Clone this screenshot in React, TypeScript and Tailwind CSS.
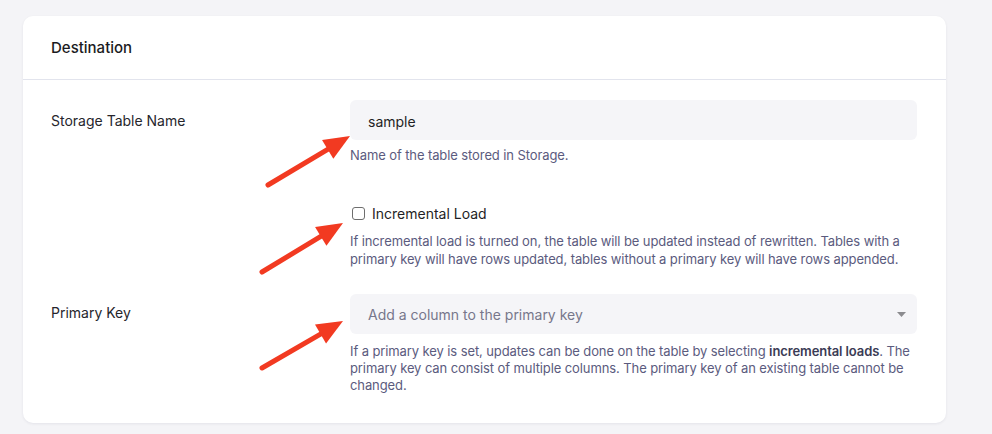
import React from 'react';

type Pt = [number, number];

const Arrow: React.FC<{ tail: Pt; tip: Pt }> = ({ tail, tip }) => {
  const dx = tip[0] - tail[0];
  const dy = tip[1] - tail[1];
  const len = Math.hypot(dx, dy);
  const ux = dx / len;
  const uy = dy / len;
  const head = 26;
  const half = 11;
  const bx = tip[0] - ux * head;
  const by = tip[1] - uy * head;
  const nx = -uy;
  const ny = ux;
  const wings = `${tip[0]},${tip[1]} ${bx + nx * half},${by + ny * half} ${bx - nx * half},${by - ny * half}`;
  return (
    <g>
      <line x1={tail[0]} y1={tail[1]} x2={bx + ux * 2} y2={by + uy * 2} stroke="#f23a21" strokeWidth="5" strokeLinecap="round" />
      <polygon points={wings} fill="#f23a21" />
    </g>
  );
};

const helpCls = 'text-[13px] tracking-[-0.1px] text-[#5b5b7e]';

const App: React.FC = () => {
  return (
    <div className="relative h-[434px] w-full overflow-hidden bg-[#f4f4f7] pt-4 pl-[23px]" style={{ fontFamily: 'Inter, "Noto Sans", sans-serif' }}>
      <div className="w-[923px] rounded-[10px] bg-white shadow-[0_1px_3px_rgba(20,20,50,0.07)]">
        <header className="flex h-16 items-center border-b border-[#e2e4ed] px-7 pt-[2px]">
          <h2 className="text-[15px] font-medium text-[#1b1b22]">Destination</h2>
        </header>

        <div className="grid grid-cols-[299px_1fr] pl-7 pr-[29px] pt-5 pb-[29px]">
          {/* Storage table name */}
          <div className="pt-[11px] text-sm leading-5 text-[#26262c]">Storage Table Name</div>
          <div>
            <div className="flex h-10 items-center rounded-md bg-[#f5f5f8] px-[18px] pt-[3px] text-sm text-[#1f1f25]">sample</div>
            <p className={`${helpCls} mt-[7px] leading-[17.5px]`}>Name of the table stored in Storage.</p>
          </div>

          {/* Incremental load */}
          <div />
          <div className="mt-[39px]">
            <label className="flex h-5 items-center gap-[7px] pl-[2px] text-sm text-[#1f1f25]">
              <span className="h-[13px] w-[13px] rounded-[3px] border border-[#6e6e6e] bg-white" />
              Incremental Load
            </label>
            <p className={`${helpCls} mt-2 leading-[18px]`}>
              If incremental load is turned on, the table will be updated instead of rewritten. Tables with a
              <br />
              primary key will have rows updated, tables without a primary key will have rows appended.
            </p>
          </div>

          {/* Primary key */}
          <div className="mt-[26px] pt-[9px] text-sm leading-5 text-[#26262c]">Primary Key</div>
          <div className="mt-[26px]">
            <div className="flex h-10 items-center justify-between rounded-md bg-[#f5f5f8] pl-[18px] pr-[11px] pt-[2px] text-sm text-[#77778b]">
              <span>Add a column to the primary key</span>
              <svg width="9" height="5" viewBox="0 0 9 5"><polygon points="0,0 9,0 4.5,5" fill="#8b8b8f" /></svg>
            </div>
            <p className={`${helpCls} mt-[9px] leading-[17px]`}>
              If a primary key is set, updates can be done on the table by selecting <b className="font-semibold text-[#3b3b55]">incremental loads</b>. The
              <br />
              primary key can consist of multiple columns. The primary key of an existing table cannot be
              <br />
              changed.
            </p>
          </div>
        </div>
      </div>

      <svg className="pointer-events-none absolute inset-0" width="992" height="434">
        <Arrow tail={[268, 185]} tip={[350, 136]} />
        <Arrow tail={[262, 272]} tip={[343, 223]} />
        <Arrow tail={[262, 368]} tip={[343, 321]} />
      </svg>
    </div>
  );
};

export default App;
